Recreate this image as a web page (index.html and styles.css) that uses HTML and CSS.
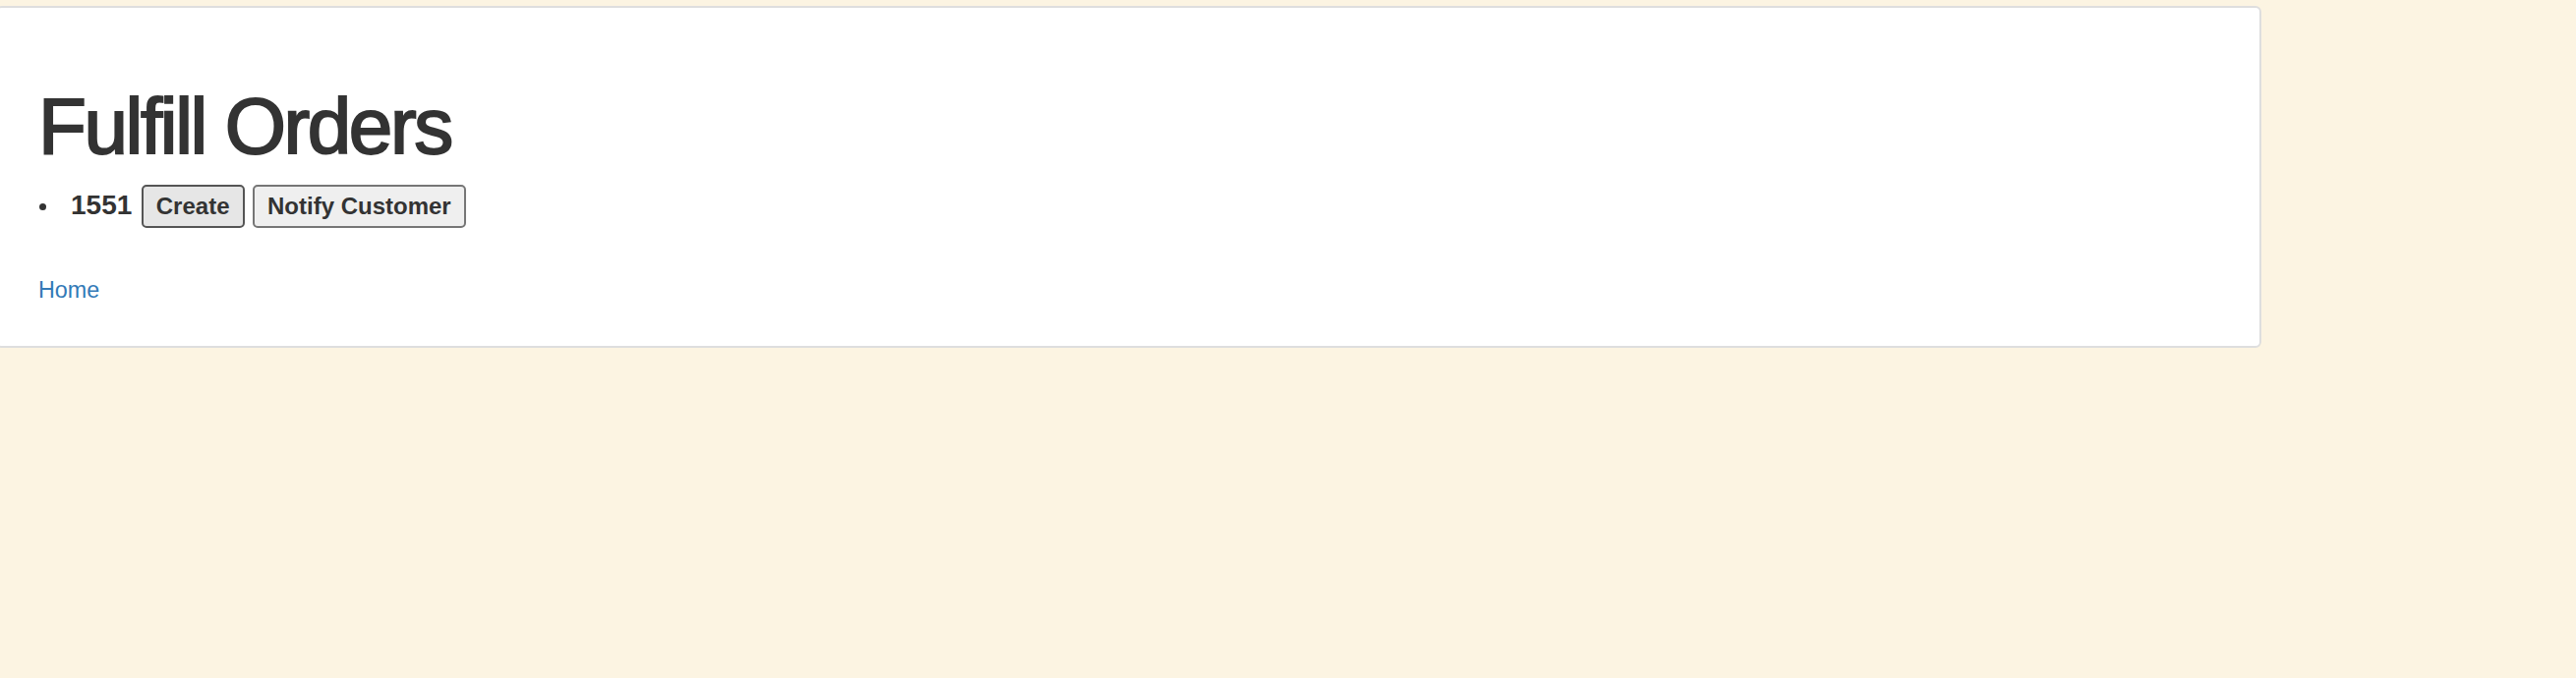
FILE: index.html
```html
<!DOCTYPE html>
<html lang="en">
<head>
<meta charset="utf-8">
<title>Fulfill Orders</title>
<link rel="stylesheet" href="styles.css">
</head>
<body>
<div class="panel">
  <h1 class="title">Fulfill Orders</h1>
  <ul class="orders">
    <li class="order"><b class="order-id">1551</b> <button class="btn btn-active" type="button">Create</button> <button class="btn" type="button">Notify Customer</button></li>
  </ul>
  <div class="nav"><a class="home-link" href="#">Home</a></div>
</div>
</body>
</html>
```

FILE: styles.css
```css
html, body {
  margin: 0;
  padding: 0;
}
body {
  background: #fcf4e2;
  color: #333;
  font-family: "Liberation Sans", Arial, Helvetica, sans-serif;
  font-size: 23.33px;
  line-height: 1.42857;
}
.panel {
  box-sizing: border-box;
  width: 2304px;
  margin: 6px 0 0 -4px;
  padding: 44px 0 40px 41px;
  background: #fff;
  border: 2px solid #dedede;
  border-radius: 6px;
}
.title {
  margin: 33px 0 15px 0;
  font-size: 80px;
  line-height: 88px;
  font-weight: normal;
  letter-spacing: -2.4px;
  -webkit-text-stroke: 2px #333;
  color: #333;
}
.orders {
  margin: 0 0 47px 0;
  padding: 0 0 0 33px;
  list-style: none;
}
.order::before {
  content: "";
  display: inline-block;
  width: 7px;
  height: 7px;
  border-radius: 50%;
  background: #333;
  margin: 0 25px 0 -32px;
  vertical-align: 4px;
}
.order-id {
  font-size: 28px;
  font-weight: bold;
  margin-right: 1px;
}
.btn {
  font-family: "Liberation Sans", Arial, Helvetica, sans-serif;
  font-size: 24px;
  font-weight: bold;
  line-height: normal;
  color: #333;
  background: #efefef;
  border: 2px solid #767676;
  border-radius: 5px;
  padding: 6px 13px;
  margin: 0 0 0 2px;
}
.btn-active {
  background: #e6e6e6;
  border-color: #555;
}
.home-link {
  color: #337ab7;
  text-decoration: none;
}
```
